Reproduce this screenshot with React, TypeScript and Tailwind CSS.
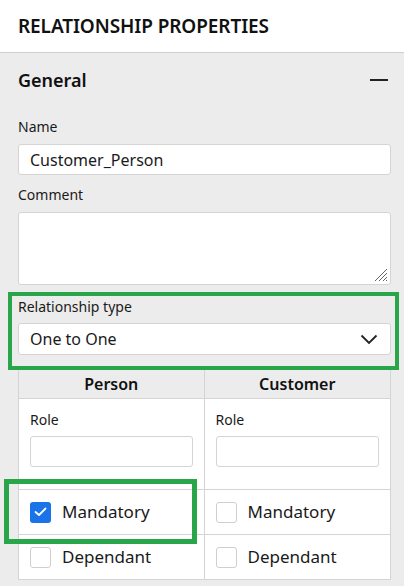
import React from "react";

const font = { fontFamily: '"Noto Sans", "Open Sans", sans-serif' };

function Checkbox({ checked }: { checked?: boolean }) {
  return checked ? (
    <div className="w-[21px] h-[21px] rounded-[3px] bg-[#1a73e8] flex items-center justify-center">
      <svg width="13" height="10" viewBox="0 0 13 10" fill="none">
        <path d="M1.5 5 L5 8 L11.5 1.5" stroke="white" strokeWidth="1.8" strokeLinecap="round" strokeLinejoin="round" />
      </svg>
    </div>
  ) : (
    <div className="w-[21px] h-[21px] rounded-[3px] bg-white border border-[#cfcfcf]" />
  );
}

export default function App() {
  return (
    <div className="w-[404px] h-[586px] overflow-hidden bg-[#ececec] text-[#1a1a1a]" style={font}>
      <div className="h-[53px] bg-white border-b border-[#cfcfcf] flex items-center px-[18px]">
        <div className="text-[19px] font-semibold tracking-[-0.1px] text-[#111]">RELATIONSHIP PROPERTIES</div>
      </div>
      <div className="pl-[18px] pr-[13px] relative">
        <div className="h-[54px] flex items-center justify-between">
          <div className="text-[18px] font-semibold text-[#111]">General</div>
          <div className="w-[18px] h-[2px] bg-[#222] mr-[3px]" />
        </div>
        <div className="mt-[10px] text-[14px] leading-[20px]">Name</div>
        <div className="mt-[7px] h-[31px] bg-white border border-[#d4d4d4] rounded-[3px] flex items-center px-[11px] text-[16px]">
          Customer_Person
        </div>
        <div className="mt-[10px] text-[14px] leading-[20px]">Comment</div>
        <div className="mt-[7px] h-[73px] bg-white border border-[#d4d4d4] rounded-[3px] relative">
          <svg className="absolute right-[2px] bottom-[2px]" width="16" height="16" viewBox="0 0 16 16">
            <path d="M15 3 L3 15 M15 7 L7 15 M15 11 L11 15 M15 14 L14 15" stroke="#666" strokeWidth="1" />
          </svg>
        </div>
        <div className="mt-[7px] ml-[-10px] mr-[-8px] border-[4px] border-[#2aa64a] pt-[1px] pl-[6px] pr-[4px] pb-[11px]">
          <div className="text-[14px] leading-[20px]">Relationship type</div>
          <div className="mt-[6px] h-[32px] bg-white border border-[#d4d4d4] rounded-[3px] flex items-center justify-between pl-[11px] pr-[12px] text-[16px]">
            <span>One to One</span>
            <svg width="18" height="11" viewBox="0 0 18 11" fill="none">
              <path d="M1.5 1.5 L9 9 L16.5 1.5" stroke="#222" strokeWidth="1.8" />
            </svg>
          </div>
        </div>
        <div className="grid grid-cols-2 border-l border-r border-b border-[#d4d4d4]">
          <div className="h-[29px] border-b border-r border-[#d4d4d4] flex items-center justify-center text-[16px] font-semibold text-[#111]">Person</div>
          <div className="h-[29px] border-b border-[#d4d4d4] flex items-center justify-center text-[16px] font-semibold text-[#111]">Customer</div>
          <div className="h-[91px] bg-white border-b border-r border-[#d4d4d4] px-[11px] pt-[11px]">
            <div className="text-[14px] leading-[20px]">Role</div>
            <div className="mt-[6px] h-[31px] bg-white border border-[#d4d4d4] rounded-[3px]" />
          </div>
          <div className="h-[91px] bg-white border-b border-[#d4d4d4] px-[11px] pt-[11px]">
            <div className="text-[14px] leading-[20px]">Role</div>
            <div className="mt-[6px] h-[31px] bg-white border border-[#d4d4d4] rounded-[3px]" />
          </div>
          <div className="h-[45px] bg-white border-b border-r border-[#d4d4d4] flex items-center gap-[11px] px-[11px] text-[17px]">
            <Checkbox checked />
            <span>Mandatory</span>
          </div>
          <div className="h-[45px] bg-white border-b border-[#d4d4d4] flex items-center gap-[11px] px-[11px] text-[17px]">
            <Checkbox />
            <span>Mandatory</span>
          </div>
          <div className="h-[44px] bg-white border-r border-[#d4d4d4] flex items-center gap-[11px] px-[11px] text-[17px]">
            <Checkbox />
            <span>Dependant</span>
          </div>
          <div className="h-[44px] bg-white flex items-center gap-[11px] px-[11px] text-[17px]">
            <Checkbox />
            <span>Dependant</span>
          </div>
        </div>
        <div className="absolute left-[4px] top-[426px] w-[193px] h-[65px] border-[5px] border-[#2aa64a] pointer-events-none" />
      </div>
    </div>
  );
}
